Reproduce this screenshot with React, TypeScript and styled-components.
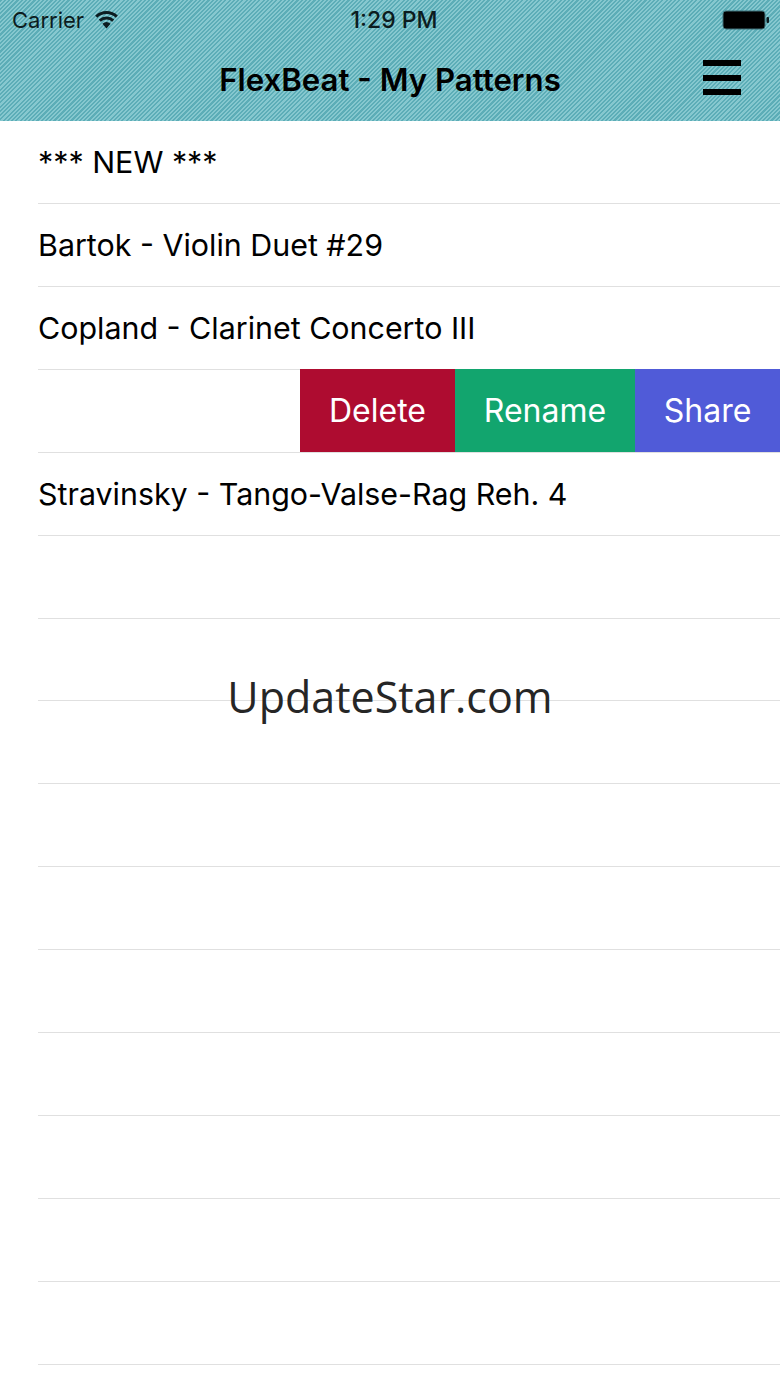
import * as React from 'react'
import styled, { createGlobalStyle } from 'styled-components'

const GlobalStyle = createGlobalStyle`
  html, body {
    margin: 0;
    padding: 0;
    background: #fff;
  }
`

const Page = styled.div`
  position: relative;
  width: 780px;
  height: 1387px;
  overflow: hidden;
  background: #fff;
  font-family: Inter, "Liberation Sans", sans-serif;
  color: #000;
`

const Header = styled.header`
  height: 121px;
  box-sizing: border-box;
  display: flex;
  flex-direction: column;
  background-color: #70b8c0;
  background-image: repeating-linear-gradient(
    135deg,
    #5cadb7 0,
    #5cadb7 1.5px,
    #86c8cf 1.5px,
    #86c8cf 3px
  );
`

const StatusBar = styled.div`
  height: 40px;
  padding: 0 10px 0 12px;
  display: flex;
  align-items: center;
  justify-content: space-between;
  font-size: 22px;
  color: #0c1c20;
`

const Carrier = styled.div`
  display: flex;
  align-items: center;
  gap: 11px;
  width: 220px;
`

const Clock = styled.div`
  font-size: 23px;
  font-weight: 500;
  margin-left: 6px;
`

const BatterySlot = styled.div`
  width: 220px;
  display: flex;
  justify-content: flex-end;
`

const NavBar = styled.div`
  position: relative;
  flex: 1;
  display: flex;
  align-items: center;
  justify-content: center;
  padding-bottom: 1px;
`

const Title = styled.div`
  font-size: 31.2px;
  font-weight: 600;
`

const MenuIcon = styled.svg`
  position: absolute;
  right: 38px;
  top: 20px;
`

const List = styled.div`
  display: flex;
  flex-direction: column;
`

const Row = styled.div`
  position: relative;
  height: 82.93px;
  box-sizing: border-box;
  margin-left: 38px;
  display: flex;
  align-items: center;
  border-bottom: 1px solid #e0e0e0;
  font-size: 30.4px;
`

const Actions = styled.div`
  align-self: stretch;
  margin-left: auto;
  margin-top: -1px;
  display: flex;
`

const Action = styled.div<{ $bg: string; $w: number }>`
  width: ${p => p.$w}px;
  background: ${p => p.$bg};
  color: #fff;
  display: flex;
  align-items: center;
  justify-content: center;
  font-size: 32px;
`

const Watermark = styled.div`
  position: absolute;
  left: 0;
  width: 780px;
  top: 667px;
  text-align: center;
  font-family: "Open Sans", sans-serif;
  font-size: 43px;
  line-height: 60px;
  color: #262626;
`

const rows = [
  '*** NEW ***',
  'Bartok - Violin Duet #29',
  'Copland - Clarinet Concerto III',
  null,
  'Stravinsky - Tango-Valse-Rag Reh. 4',
  '', '', '', '', '', '', '', '', '', '',
]

const WifiIcon = () => (
  <svg width="23" height="18" viewBox="0 0 23 18">
    <path d="M11.5 17.5 L7.4 12.8 A6.4 6.4 0 0 1 15.6 12.8 Z" fill="#0c1c20" />
    <path d="M4.8 9.6 A10 10 0 0 1 18.2 9.6" fill="none" stroke="#0c1c20" strokeWidth="3" />
    <path d="M1.2 5.6 A15 15 0 0 1 21.8 5.6" fill="none" stroke="#0c1c20" strokeWidth="3" />
  </svg>
)

const BatteryIcon = () => (
  <svg width="48" height="20" viewBox="0 0 48 20">
    <rect x="1" y="1" width="42" height="18" rx="3" fill="#000" stroke="#3f6f76" strokeWidth="1" />
    <rect x="44.5" y="7" width="2.5" height="6" rx="1" fill="#0c1c20" />
  </svg>
)

const App: React.FC = () => (
  <Page>
    <GlobalStyle />
    <Header>
      <StatusBar>
        <Carrier>
          Carrier
          <WifiIcon />
        </Carrier>
        <Clock>1:29 PM</Clock>
        <BatterySlot>
          <BatteryIcon />
        </BatterySlot>
      </StatusBar>
      <NavBar>
        <Title>FlexBeat - My Patterns</Title>
        <MenuIcon width="40" height="38" viewBox="0 0 40 38">
          <rect x="1" y="0" width="38" height="6" fill="#000" />
          <rect x="1" y="15" width="38" height="6" fill="#000" />
          <rect x="1" y="29" width="38" height="6" fill="#000" />
        </MenuIcon>
      </NavBar>
    </Header>
    <List>
      {rows.map((text, i) =>
        text === null ? (
          <Row key={i}>
            <Actions>
              <Action $bg="#ae0c30" $w={155}>Delete</Action>
              <Action $bg="#12a56e" $w={180}>Rename</Action>
              <Action $bg="#505bd8" $w={145}>Share</Action>
            </Actions>
          </Row>
        ) : (
          <Row key={i}>{text}</Row>
        )
      )}
    </List>
    <Watermark>UpdateStar.com</Watermark>
  </Page>
)

export default App
